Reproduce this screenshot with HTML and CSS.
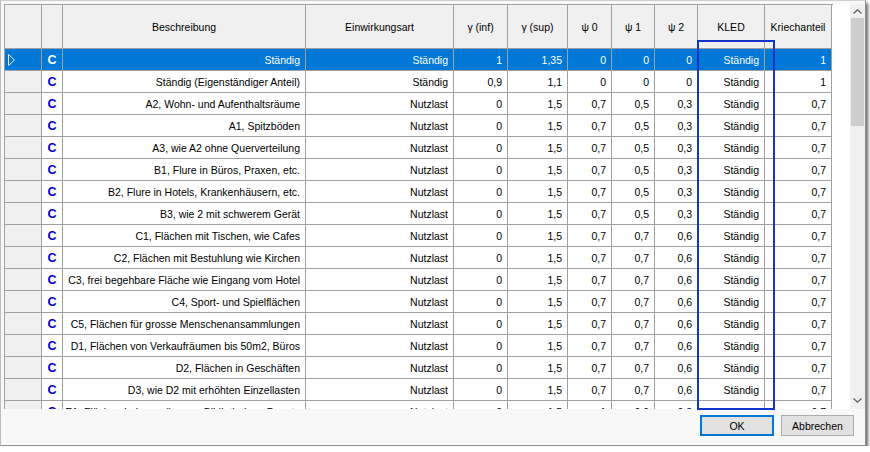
FILE: index.html
```html
<!DOCTYPE html>
<html lang="de">
<head>
  <meta charset="UTF-8">
  <title>Einwirkungen</title>
  <link rel="stylesheet" href="styles.css">
</head>
<body>

  <div class="window">
    <div class="grid">
      <div class="table-area">
        <div class="table">

          <div class="row head">
            <div class="cell"></div>
            <div class="cell"></div>
            <div class="cell">Beschreibung</div>
            <div class="cell">Einwirkungsart</div>
            <div class="cell">γ (inf)</div>
            <div class="cell">γ (sup)</div>
            <div class="cell">ψ 0</div>
            <div class="cell">ψ 1</div>
            <div class="cell">ψ 2</div>
            <div class="cell">KLED</div>
            <div class="cell">Kriechanteil</div>
          </div>

          <div class="row selected">
            <div class="cell rh">
              <svg width="8" height="12" viewBox="0 0 8 12"><polygon points="0.5,0.5 6.5,6 0.5,11.5" fill="none" stroke="#e6e6e6" stroke-width="1"/></svg>
            </div>
            <div class="cell code">C</div>
            <div class="cell">Ständig</div>
            <div class="cell">Ständig</div>
            <div class="cell">1</div>
            <div class="cell">1,35</div>
            <div class="cell">0</div>
            <div class="cell">0</div>
            <div class="cell">0</div>
            <div class="cell">Ständig</div>
            <div class="cell">1</div>
          </div>

          <div class="row">
            <div class="cell rh"></div>
            <div class="cell code">C</div>
            <div class="cell">Ständig (Eigenständiger Anteil)</div>
            <div class="cell">Ständig</div>
            <div class="cell">0,9</div>
            <div class="cell">1,1</div>
            <div class="cell">0</div>
            <div class="cell">0</div>
            <div class="cell">0</div>
            <div class="cell">Ständig</div>
            <div class="cell">1</div>
          </div>

          <div class="row">
            <div class="cell rh"></div>
            <div class="cell code">C</div>
            <div class="cell">A2, Wohn- und Aufenthaltsräume</div>
            <div class="cell">Nutzlast</div>
            <div class="cell">0</div>
            <div class="cell">1,5</div>
            <div class="cell">0,7</div>
            <div class="cell">0,5</div>
            <div class="cell">0,3</div>
            <div class="cell">Ständig</div>
            <div class="cell">0,7</div>
          </div>

          <div class="row">
            <div class="cell rh"></div>
            <div class="cell code">C</div>
            <div class="cell">A1, Spitzböden</div>
            <div class="cell">Nutzlast</div>
            <div class="cell">0</div>
            <div class="cell">1,5</div>
            <div class="cell">0,7</div>
            <div class="cell">0,5</div>
            <div class="cell">0,3</div>
            <div class="cell">Ständig</div>
            <div class="cell">0,7</div>
          </div>

          <div class="row">
            <div class="cell rh"></div>
            <div class="cell code">C</div>
            <div class="cell">A3, wie A2 ohne Querverteilung</div>
            <div class="cell">Nutzlast</div>
            <div class="cell">0</div>
            <div class="cell">1,5</div>
            <div class="cell">0,7</div>
            <div class="cell">0,5</div>
            <div class="cell">0,3</div>
            <div class="cell">Ständig</div>
            <div class="cell">0,7</div>
          </div>

          <div class="row">
            <div class="cell rh"></div>
            <div class="cell code">C</div>
            <div class="cell">B1, Flure in Büros, Praxen, etc.</div>
            <div class="cell">Nutzlast</div>
            <div class="cell">0</div>
            <div class="cell">1,5</div>
            <div class="cell">0,7</div>
            <div class="cell">0,5</div>
            <div class="cell">0,3</div>
            <div class="cell">Ständig</div>
            <div class="cell">0,7</div>
          </div>

          <div class="row">
            <div class="cell rh"></div>
            <div class="cell code">C</div>
            <div class="cell">B2, Flure in Hotels, Krankenhäusern, etc.</div>
            <div class="cell">Nutzlast</div>
            <div class="cell">0</div>
            <div class="cell">1,5</div>
            <div class="cell">0,7</div>
            <div class="cell">0,5</div>
            <div class="cell">0,3</div>
            <div class="cell">Ständig</div>
            <div class="cell">0,7</div>
          </div>

          <div class="row">
            <div class="cell rh"></div>
            <div class="cell code">C</div>
            <div class="cell">B3, wie 2 mit schwerem Gerät</div>
            <div class="cell">Nutzlast</div>
            <div class="cell">0</div>
            <div class="cell">1,5</div>
            <div class="cell">0,7</div>
            <div class="cell">0,5</div>
            <div class="cell">0,3</div>
            <div class="cell">Ständig</div>
            <div class="cell">0,7</div>
          </div>

          <div class="row">
            <div class="cell rh"></div>
            <div class="cell code">C</div>
            <div class="cell">C1, Flächen mit Tischen, wie Cafes</div>
            <div class="cell">Nutzlast</div>
            <div class="cell">0</div>
            <div class="cell">1,5</div>
            <div class="cell">0,7</div>
            <div class="cell">0,7</div>
            <div class="cell">0,6</div>
            <div class="cell">Ständig</div>
            <div class="cell">0,7</div>
          </div>

          <div class="row">
            <div class="cell rh"></div>
            <div class="cell code">C</div>
            <div class="cell">C2, Flächen mit Bestuhlung wie Kirchen</div>
            <div class="cell">Nutzlast</div>
            <div class="cell">0</div>
            <div class="cell">1,5</div>
            <div class="cell">0,7</div>
            <div class="cell">0,7</div>
            <div class="cell">0,6</div>
            <div class="cell">Ständig</div>
            <div class="cell">0,7</div>
          </div>

          <div class="row">
            <div class="cell rh"></div>
            <div class="cell code">C</div>
            <div class="cell">C3, frei begehbare Fläche wie Eingang vom Hotel</div>
            <div class="cell">Nutzlast</div>
            <div class="cell">0</div>
            <div class="cell">1,5</div>
            <div class="cell">0,7</div>
            <div class="cell">0,7</div>
            <div class="cell">0,6</div>
            <div class="cell">Ständig</div>
            <div class="cell">0,7</div>
          </div>

          <div class="row">
            <div class="cell rh"></div>
            <div class="cell code">C</div>
            <div class="cell">C4, Sport- und Spielflächen</div>
            <div class="cell">Nutzlast</div>
            <div class="cell">0</div>
            <div class="cell">1,5</div>
            <div class="cell">0,7</div>
            <div class="cell">0,7</div>
            <div class="cell">0,6</div>
            <div class="cell">Ständig</div>
            <div class="cell">0,7</div>
          </div>

          <div class="row">
            <div class="cell rh"></div>
            <div class="cell code">C</div>
            <div class="cell">C5, Flächen für grosse Menschenansammlungen</div>
            <div class="cell">Nutzlast</div>
            <div class="cell">0</div>
            <div class="cell">1,5</div>
            <div class="cell">0,7</div>
            <div class="cell">0,7</div>
            <div class="cell">0,6</div>
            <div class="cell">Ständig</div>
            <div class="cell">0,7</div>
          </div>

          <div class="row">
            <div class="cell rh"></div>
            <div class="cell code">C</div>
            <div class="cell">D1, Flächen von Verkaufräumen bis 50m2, Büros</div>
            <div class="cell">Nutzlast</div>
            <div class="cell">0</div>
            <div class="cell">1,5</div>
            <div class="cell">0,7</div>
            <div class="cell">0,7</div>
            <div class="cell">0,6</div>
            <div class="cell">Ständig</div>
            <div class="cell">0,7</div>
          </div>

          <div class="row">
            <div class="cell rh"></div>
            <div class="cell code">C</div>
            <div class="cell">D2, Flächen in Geschäften</div>
            <div class="cell">Nutzlast</div>
            <div class="cell">0</div>
            <div class="cell">1,5</div>
            <div class="cell">0,7</div>
            <div class="cell">0,7</div>
            <div class="cell">0,6</div>
            <div class="cell">Ständig</div>
            <div class="cell">0,7</div>
          </div>

          <div class="row">
            <div class="cell rh"></div>
            <div class="cell code">C</div>
            <div class="cell">D3, wie D2 mit erhöhten Einzellasten</div>
            <div class="cell">Nutzlast</div>
            <div class="cell">0</div>
            <div class="cell">1,5</div>
            <div class="cell">0,7</div>
            <div class="cell">0,7</div>
            <div class="cell">0,6</div>
            <div class="cell">Ständig</div>
            <div class="cell">0,7</div>
          </div>

          <div class="row">
            <div class="cell rh"></div>
            <div class="cell code">C</div>
            <div class="cell">E1, Flächen in Lagerräumen, Bibliotheken, Depots</div>
            <div class="cell">Nutzlast</div>
            <div class="cell">0</div>
            <div class="cell">1,5</div>
            <div class="cell">1</div>
            <div class="cell">0,9</div>
            <div class="cell">0,8</div>
            <div class="cell">Ständig</div>
            <div class="cell">0,7</div>
          </div>

        </div>
      </div>

      <!-- vertical scrollbar -->
      <div class="scrollbar">
        <div class="sb-btn up">
          <svg width="9" height="5" viewBox="0 0 9 5"><polyline points="0.5,4.5 4.5,0.8 8.5,4.5" fill="none" stroke="#606060" stroke-width="1.3"/></svg>
        </div>
        <div class="thumb"></div>
        <div class="sb-space"></div>
        <div class="sb-btn down">
          <svg width="9" height="5" viewBox="0 0 9 5"><polyline points="0.5,0.5 4.5,4.2 8.5,0.5" fill="none" stroke="#606060" stroke-width="1.3"/></svg>
        </div>
      </div>
    </div>

    <div class="buttons">
      <button class="btn default">OK</button>
      <button class="btn cancel">Abbrechen</button>
    </div>

    <!-- marker around the KLED column -->
    <div class="highlight"></div>
  </div>

</body>
</html>
```

FILE: styles.css
```css
body {
  margin: 0;
  background: #fff;
  font-family: "Liberation Sans", Arial, sans-serif;
  font-size: 10.5px;
  color: #000;
}

.window {
  position: relative;
  box-sizing: border-box;
  width: 866px;
  height: 446px;
  padding: 3px 0 0 3px;
  background: #f8f8f8;
  border: 1px solid #8f8f8f;
  border-top-color: #cfcfcf;
  border-left-color: #bdbdbd;
  box-shadow: 2px 3px 3px rgba(0, 0, 0, 0.6);
}

.grid {
  display: flex;
  height: 405px;
  background: #fff;
}

.table-area {
  flex: 1;
  overflow: hidden;
}

.table {
  width: 828px;
  border-left: 1px solid #a0a0a0;
  border-top: 1px solid #a0a0a0;
}

.row {
  display: grid;
  grid-template-columns: 37px 21px 243px 148px 54px 60px 44px 43px 43px 67px 67px;
  height: 22px;
}

.cell {
  box-sizing: border-box;
  display: flex;
  align-items: center;
  justify-content: flex-end;
  padding-right: 5px;
  border-right: 1px solid #a0a0a0;
  border-bottom: 1px solid #a0a0a0;
  white-space: nowrap;
  overflow: hidden;
}

.head {
  height: 44px;
}

.head .cell {
  justify-content: center;
  padding: 0;
  background: #f0f0f0;
}

.rh {
  justify-content: flex-start;
  padding: 0 0 0 3px;
  background: #f0f0f0;
}

.code {
  justify-content: center;
  padding: 0;
  color: #0000cd;
  font-size: 12.5px;
  font-weight: bold;
}

.selected .cell {
  background: #0078d7;
  color: #fff;
}

/* scrollbar */
.scrollbar {
  display: flex;
  flex-direction: column;
  align-items: center;
  width: 15px;
  background: #f0f0f0;
}

.sb-btn {
  display: flex;
  align-items: center;
  justify-content: center;
  width: 100%;
}

.sb-btn.up {
  height: 14px;
}

.sb-btn.down {
  height: 17px;
}

.thumb {
  width: 13px;
  height: 108px;
  background: #cdcdcd;
}

.sb-space {
  flex: 1;
}

/* dialog buttons */
.buttons {
  display: flex;
  justify-content: flex-end;
  gap: 7px;
  margin-top: 6px;
  padding-right: 11px;
}

.btn {
  box-sizing: border-box;
  height: 21px;
  padding: 0;
  font: inherit;
  color: #000;
  background: #e1e1e1;
  border: 1px solid #adadad;
}

.btn.default {
  width: 74px;
  border: 2px solid #0078d7;
}

.btn.cancel {
  width: 73px;
}

.highlight {
  position: absolute;
  left: 696px;
  top: 39px;
  width: 78px;
  height: 370px;
  box-sizing: border-box;
  border: 2px solid #1234c8;
  pointer-events: none;
}
```
